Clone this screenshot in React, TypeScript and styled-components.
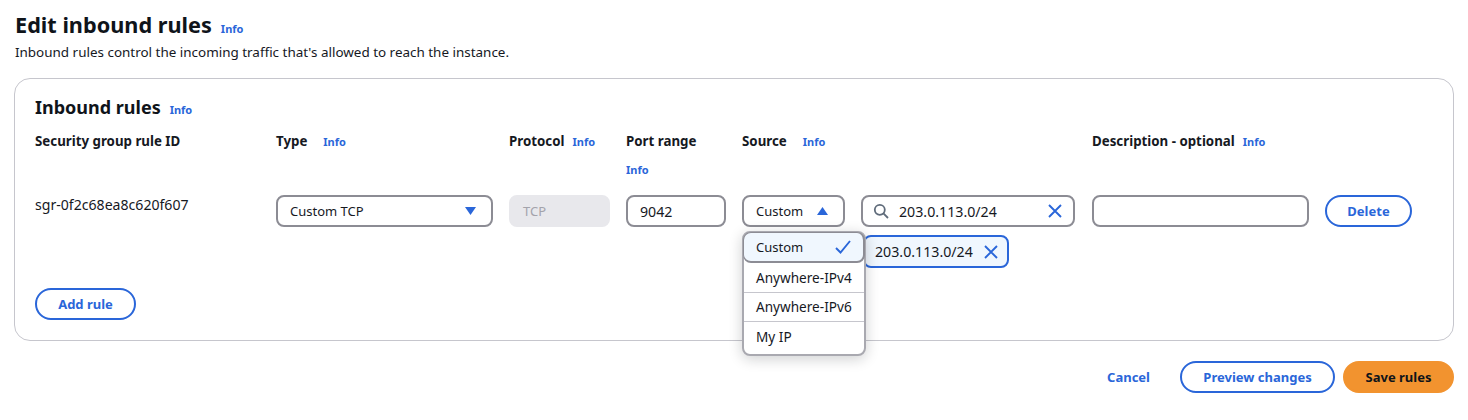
import React from 'react'
import styled, { createGlobalStyle } from 'styled-components'

const GlobalStyle = createGlobalStyle`
  body {
    margin: 0;
    background: #fff;
    color: #16191f;
    font-family: 'Noto Sans', 'Open Sans', sans-serif;
    font-size: 14px;
  }
`

const Page = styled.div`
  padding: 10px 14px 0;
`

const TitleRow = styled.div`
  display: flex;
  align-items: baseline;
  gap: 9px;
  padding-left: 1px;
`

const Title = styled.h1`
  margin: 0;
  font-size: 21.7px;
  line-height: 30px;
  font-weight: 700;
  color: #0f141a;
`

const Subtitle = styled.p`
  margin: 2px 0 0;
  padding-left: 1px;
  font-size: 13.45px;
  line-height: 20px;
  color: #16191f;
`

const InfoLink = styled.a<{ $gap?: number }>`
  margin-left: ${(p) => p.$gap ?? 0}px;
  font-size: 11px;
  line-height: 20px;
  font-weight: 700;
  color: #2a66d9;
`

const BlockInfoLink = styled(InfoLink)`
  flex-basis: 100%;
`

const Panel = styled.section`
  margin-top: 16px;
  padding: 16px 20px 20px;
  border: 1px solid #c6c6cd;
  border-radius: 16px;
`

const PanelHeading = styled.div`
  display: flex;
  align-items: baseline;
  gap: 9px;
  height: 24px;
  margin-bottom: 12px;
`

const PanelTitle = styled.h2`
  margin: 0;
  font-size: 18px;
  line-height: 24px;
  font-weight: 700;
  color: #0f141a;
`

const RuleGrid = styled.div`
  display: grid;
  grid-template-columns: 241px 233px 117px 116px 350px 233px 1fr;
  row-gap: 15px;
`

const Label = styled.div`
  display: flex;
  flex-wrap: wrap;
  align-content: flex-start;
  align-items: baseline;
  row-gap: 9px;
  font-size: 13.3px;
  line-height: 20px;
  font-weight: 700;
  color: #16191f;
`

const RuleId = styled.div`
  font-size: 14.1px;
  line-height: 20px;
`

const Field = styled.div<{ $width: number; $disabled?: boolean; $right?: number; $left?: number }>`
  box-sizing: border-box;
  display: flex;
  align-items: center;
  justify-content: space-between;
  width: ${(p) => p.$width}px;
  height: 32px;
  padding: 0 ${(p) => p.$right ?? 15}px 0 ${(p) => p.$left ?? 12}px;
  border: 2px solid ${(p) => (p.$disabled ? '#e8e8ec' : '#8c8c94')};
  border-radius: 8px;
  background: ${(p) => (p.$disabled ? '#e8e8ec' : '#fff')};
  color: ${(p) => (p.$disabled ? '#a3a3ab' : '#16191f')};
  font-size: 13px;
`

const NumericValue = styled.span`
  font-size: 14.2px;
`

const SourceCell = styled.div`
  position: relative;
  display: flex;
  align-items: flex-start;
  gap: 16px;
`

const SearchColumn = styled.div`
  display: flex;
  flex-direction: column;
  align-items: flex-start;
`

const SearchValue = styled(NumericValue)`
  flex: 1;
  margin-left: 10px;
`

const Token = styled.div`
  box-sizing: border-box;
  display: flex;
  align-items: center;
  justify-content: space-between;
  width: 146px;
  height: 33px;
  margin: 8px 0 0 2px;
  padding: 0 9px 0 10px;
  border: 2px solid #2a66d9;
  border-radius: 8px;
  background: #f0f7fe;
`

const Menu = styled.ul`
  position: absolute;
  top: 36px;
  left: 0;
  z-index: 2;
  box-sizing: border-box;
  width: 124px;
  height: 125px;
  margin: 0;
  padding: 0;
  list-style: none;
  background: #fff;
  border: 2px solid #a9a9b0;
  border-radius: 8px;
  box-shadow: 0 3px 14px rgba(15, 20, 26, 0.2);
`

const MenuItem = styled.li`
  box-sizing: border-box;
  display: flex;
  align-items: center;
  height: 29px;
  padding: 0 12px 1px;
  font-size: 13.6px;

  & + & {
    border-top: 1px solid #c6c6cd;
  }

  &:last-child {
    height: 33px;
    padding-bottom: 3px;
  }
`

const SelectedItem = styled.li`
  box-sizing: border-box;
  display: flex;
  align-items: center;
  justify-content: space-between;
  height: 31px;
  margin: -1px -1px 0;
  padding: 0 12px;
  font-size: 13px;
  border: solid #8c8c94;
  border-width: 1px 2px 2px 1px;
  border-radius: 8px;
  background: #f0f7fe;

  & + ${MenuItem} {
    border-top: 0;
  }
`

const Pill = styled.button<{ $width: number; $variant?: 'outline' | 'primary' }>`
  box-sizing: border-box;
  width: ${(p) => p.$width}px;
  height: 32px;
  padding: 0;
  border: 2px solid ${(p) => (p.$variant === 'primary' ? '#f2932f' : '#2a66d9')};
  border-radius: 16px;
  background: ${(p) => (p.$variant === 'primary' ? '#f2932f' : '#fff')};
  color: ${(p) => (p.$variant === 'primary' ? '#0f141a' : '#2a66d9')};
  font-family: inherit;
  font-size: 13px;
  font-weight: 700;
`

const AddRule = styled.div`
  margin-top: 20px;
`

const Footer = styled.footer`
  display: flex;
  justify-content: flex-end;
  align-items: center;
  gap: 8px;
  margin-top: 20px;
`

const CancelLink = styled.a`
  margin-right: 22px;
  font-size: 13px;
  font-weight: 700;
  color: #2a66d9;
`

const Caret: React.FC<{ up?: boolean }> = ({ up }) => (
  <svg width="11" height="8" viewBox="0 0 11 8">
    <path d={up ? 'M5.5 0 L11 8 H0 Z' : 'M0 0 H11 L5.5 8 Z'} fill="#2a66d9" />
  </svg>
)

const CloseIcon: React.FC = () => (
  <svg width="14" height="14" viewBox="0 0 14 14" fill="none" stroke="#2a66d9" strokeWidth="1.9">
    <path d="M1 1 L13 13 M13 1 L1 13" />
  </svg>
)

const SearchIcon: React.FC = () => (
  <svg width="16" height="16" viewBox="0 0 16 16" fill="none" stroke="#5f6b7a" strokeWidth="1.8">
    <circle cx="6.8" cy="6.8" r="5" />
    <path d="M10.4 10.4 L15 15" />
  </svg>
)

const CheckIcon: React.FC = () => (
  <svg width="16" height="14" viewBox="0 0 16 14" fill="none" stroke="#2a66d9" strokeWidth="1.9">
    <path d="M1 8 L5.5 12.5 L15 1" />
  </svg>
)

const App: React.FC = () => {
  return (
    <Page>
      <GlobalStyle />
      <TitleRow>
        <Title>Edit inbound rules</Title>
        <InfoLink>Info</InfoLink>
      </TitleRow>
      <Subtitle>Inbound rules control the incoming traffic that's allowed to reach the instance.</Subtitle>
      <Panel>
        <PanelHeading>
          <PanelTitle>Inbound rules</PanelTitle>
          <InfoLink>Info</InfoLink>
        </PanelHeading>
        <RuleGrid>
          <Label>Security group rule ID</Label>
          <Label>
            Type<InfoLink $gap={16}>Info</InfoLink>
          </Label>
          <Label>
            Protocol<InfoLink $gap={8}>Info</InfoLink>
          </Label>
          <Label>
            Port range
            <BlockInfoLink>Info</BlockInfoLink>
          </Label>
          <Label>
            Source<InfoLink $gap={16}>Info</InfoLink>
          </Label>
          <Label>
            Description - optional<InfoLink $gap={8}>Info</InfoLink>
          </Label>
          <div />

          <RuleId>sgr-0f2c68ea8c620f607</RuleId>
          <Field $width={217}>
            Custom TCP
            <Caret />
          </Field>
          <Field $width={101} $disabled>
            TCP
          </Field>
          <Field $width={100}>
            <NumericValue>9042</NumericValue>
          </Field>
          <SourceCell>
            <Field $width={103}>
              Custom
              <Caret up />
            </Field>
            <SearchColumn>
              <Field $width={214} $left={10} $right={11}>
                <SearchIcon />
                <SearchValue>203.0.113.0/24</SearchValue>
                <CloseIcon />
              </Field>
              <Token>
                <NumericValue>203.0.113.0/24</NumericValue>
                <CloseIcon />
              </Token>
            </SearchColumn>
            <Menu>
              <SelectedItem>
                Custom
                <CheckIcon />
              </SelectedItem>
              <MenuItem>Anywhere-IPv4</MenuItem>
              <MenuItem>Anywhere-IPv6</MenuItem>
              <MenuItem>My IP</MenuItem>
            </Menu>
          </SourceCell>
          <Field $width={217} />
          <Pill $width={87}>Delete</Pill>
        </RuleGrid>
        <AddRule>
          <Pill $width={101}>Add rule</Pill>
        </AddRule>
      </Panel>
      <Footer>
        <CancelLink>Cancel</CancelLink>
        <Pill $width={155}>Preview changes</Pill>
        <Pill $width={111} $variant="primary">
          Save rules
        </Pill>
      </Footer>
    </Page>
  )
}

export default App
